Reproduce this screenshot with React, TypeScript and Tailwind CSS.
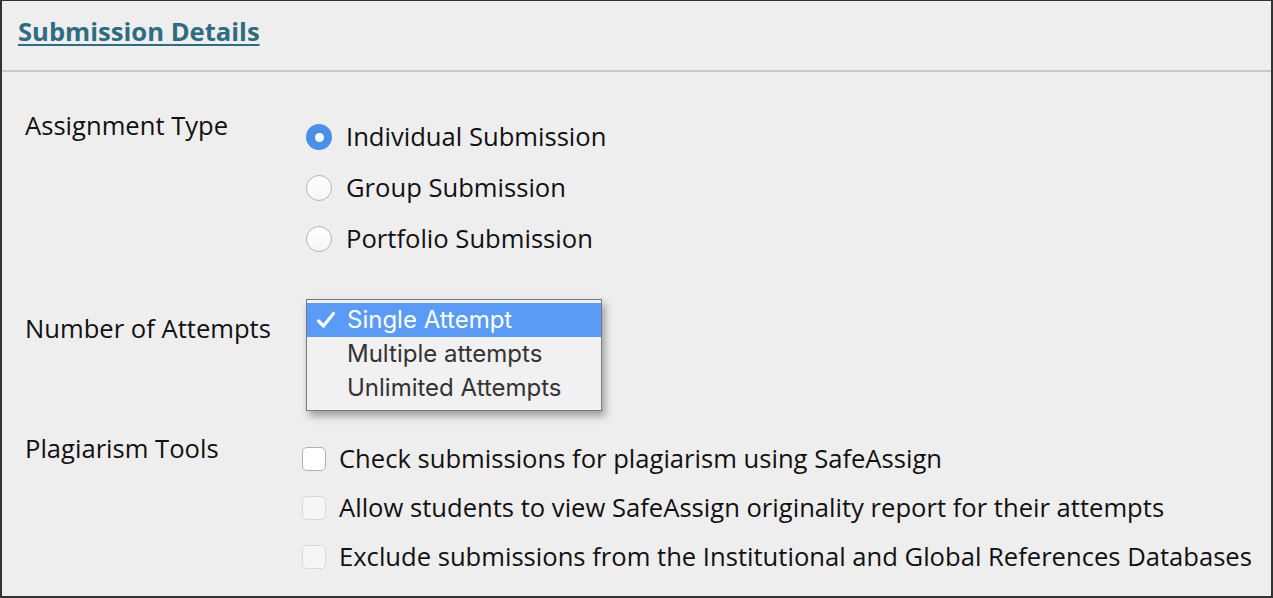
import React from 'react'

const radios = [
  { label: 'Individual Submission', checked: true },
  { label: 'Group Submission', checked: false },
  { label: 'Portfolio Submission', checked: false },
]

const checks = [
  { label: 'Check submissions for plagiarism using SafeAssign', disabled: false },
  { label: 'Allow students to view SafeAssign originality report for their attempts', disabled: true },
  { label: 'Exclude submissions from the Institutional and Global References Databases', disabled: true },
]

const Radio: React.FC<{ checked: boolean }> = ({ checked }) =>
  checked ? (
    <span className="w-[26px] h-[26px] rounded-full bg-[#4a8fe8] flex items-center justify-center shrink-0">
      <span className="w-[9px] h-[9px] rounded-full bg-white" />
    </span>
  ) : (
    <span className="w-[26px] h-[26px] rounded-full border border-[#b5b5b5] bg-gradient-to-b from-white to-[#f6f6f6] shrink-0" />
  )

const Checkbox: React.FC<{ disabled: boolean }> = ({ disabled }) => (
  <span
    className={`w-[24px] h-[24px] rounded-[5px] border shrink-0 ${
      disabled ? 'border-[#d9d9d9] bg-[#f6f6f6]' : 'border-[#b0b0b0] bg-white'
    }`}
  />
)

export default function App() {
  return (
    <div className="w-[1273px] h-[598px] bg-[#efeeef] border-x-2 border-t border-b-2 border-[#333] text-[#111] overflow-hidden" style={{ fontFamily: '"Open Sans", sans-serif' }}>
      <div className="h-[71px] border-b-2 border-[#c9c9c9] pl-[16px] pt-[15px]">
        <a className="text-[25.6px] leading-[32px] font-bold text-[#2e6d80] underline decoration-2 underline-offset-[3px]">Submission Details</a>
      </div>

      <div className="pl-[23px] text-[25.6px] leading-[32px]">
        <div className="flex mt-[39px]">
          <div className="w-[281px] -mt-[1px]">Assignment Type</div>
          <div className="flex flex-col gap-[19px] pt-[10px]">
            {radios.map((r) => (
              <div key={r.label} className="flex items-center gap-[14px]">
                <Radio checked={r.checked} />
                <span>{r.label}</span>
              </div>
            ))}
          </div>
        </div>

        <div className="flex mt-[44px]">
          <div className="w-[281px] pt-[14px]">Number of Attempts</div>
          <div className="w-[296px] h-[112px] border border-[#7a7a7a] bg-[#f1f1f1] shadow-[3px_5px_8px_rgba(0,0,0,0.35)] pt-[3px]" style={{ fontFamily: 'Inter, "Liberation Sans", sans-serif' }}>
            <div className="h-[34px] bg-[#5a9bf7] text-white flex items-center pl-[9px] text-[24px]">
              <svg width="20" height="18" viewBox="0 0 20 18" className="mr-[11px]">
                <path d="M2.5 10 L7.5 15 L17.5 2.5" fill="none" stroke="white" strokeWidth="3.2" strokeLinecap="round" strokeLinejoin="round" />
              </svg>
              <span>Single Attempt</span>
            </div>
            <div className="h-[34px] flex items-center pl-[40px] text-[24px] text-[#333]">Multiple attempts</div>
            <div className="h-[34px] flex items-center pl-[40px] text-[24px] text-[#333]">Unlimited Attempts</div>
          </div>
        </div>

        <div className="flex mt-[22px]">
          <div className="w-[277px]">Plagiarism Tools</div>
          <div className="flex flex-col gap-[17px] pt-[10px]">
            {checks.map((c) => (
              <div key={c.label} className="flex items-center gap-[13px]">
                <Checkbox disabled={c.disabled} />
                <span>{c.label}</span>
              </div>
            ))}
          </div>
        </div>
      </div>
    </div>
  )
}
